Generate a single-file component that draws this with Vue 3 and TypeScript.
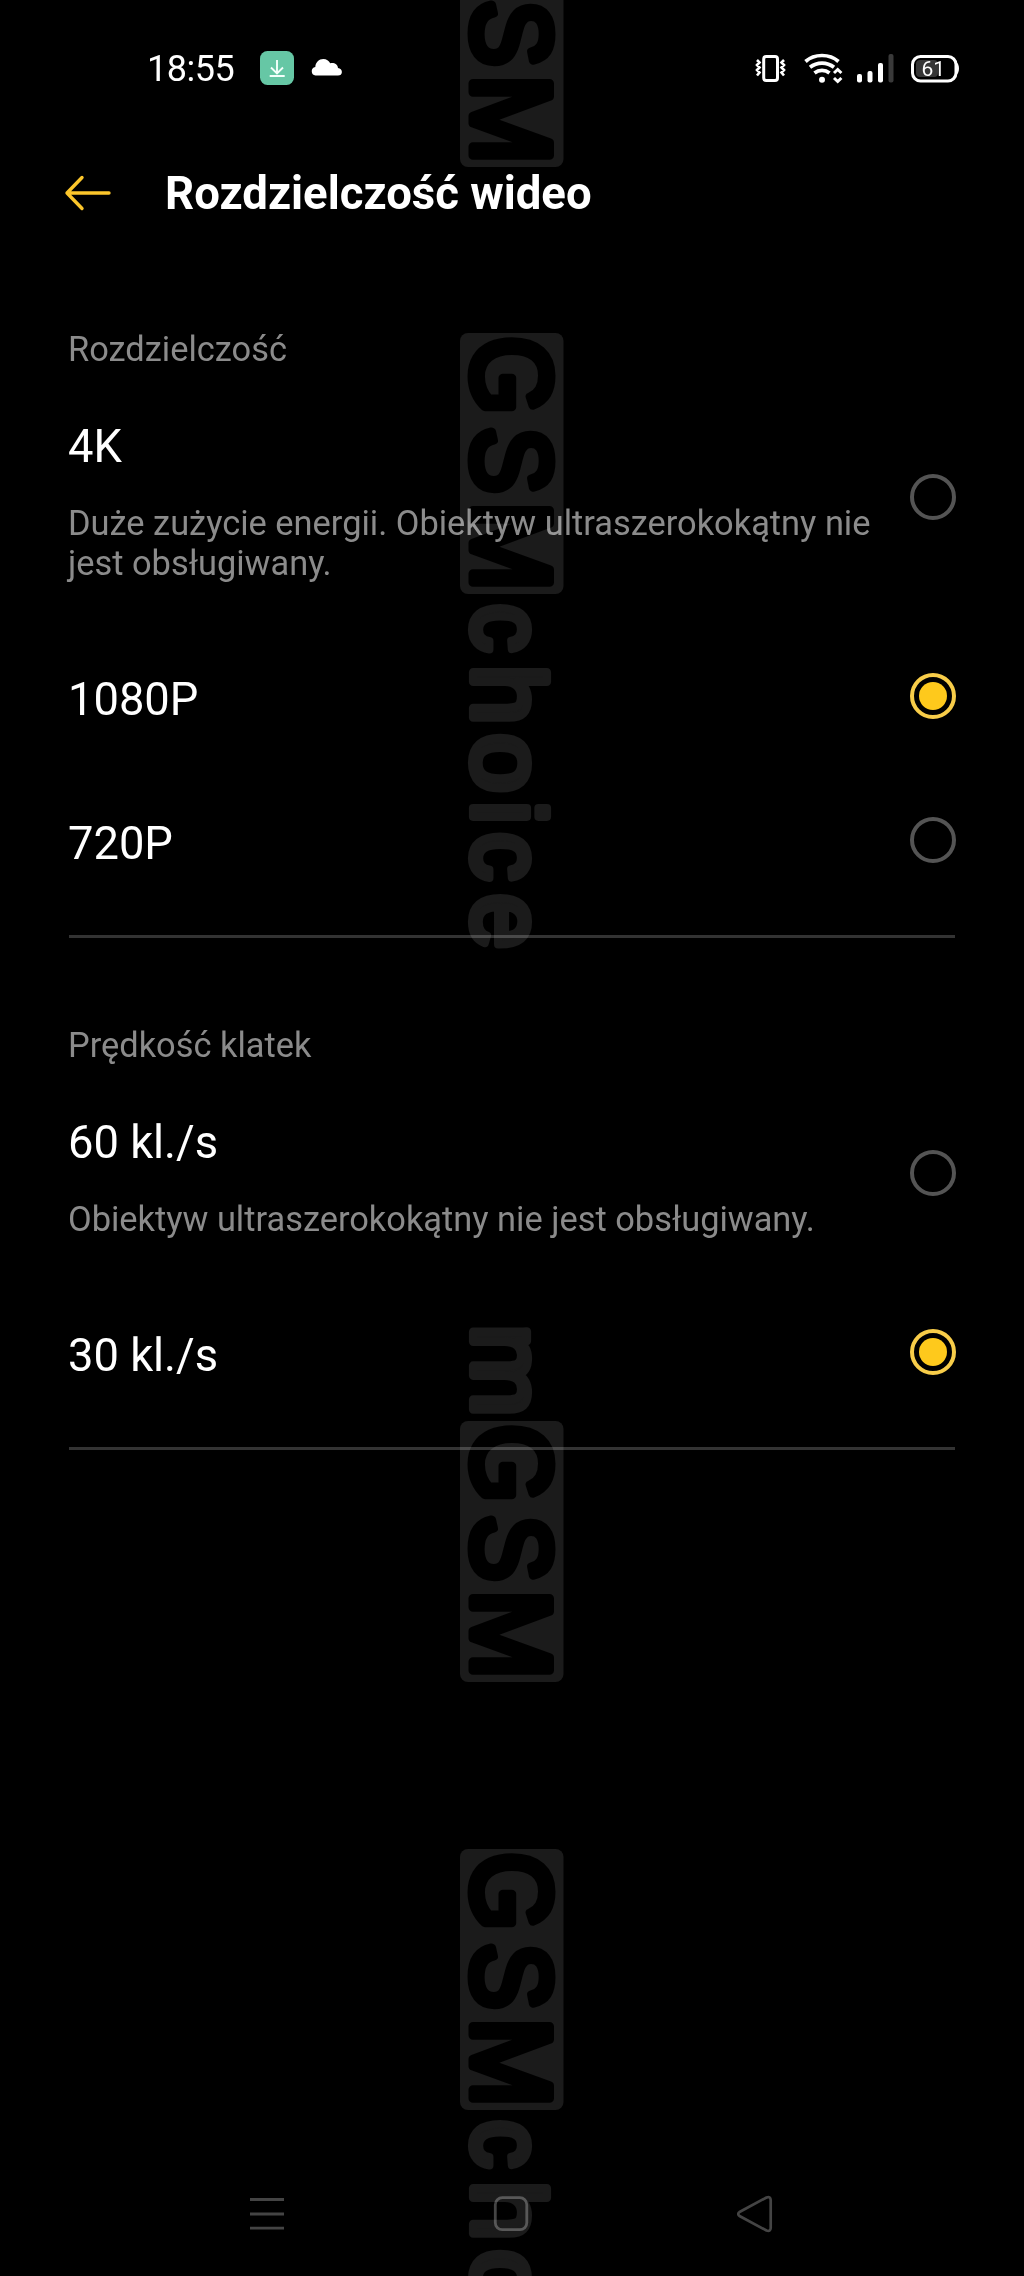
<script setup lang="ts">
import { ref } from 'vue'

interface Option {
  label: string
  note?: string
}

interface Group {
  title: string
  options: Option[]
}

interface Glyph {
  ch: string
  at: number
  bearing: number
  stretch: number
}

interface Mark {
  y: number
  boxed: Glyph[]
  outside: Glyph[]
}

const groups: Group[] = [
  {
    title: 'Rozdzielczość',
    options: [
      { label: '4K', note: 'Duże zużycie energii. Obiektyw ultraszerokokątny nie jest obsługiwany.' },
      { label: '1080P' },
      { label: '720P' },
    ],
  },
  {
    title: 'Prędkość klatek',
    options: [
      { label: '60 kl./s', note: 'Obiektyw ultraszerokokątny nie jest obsługiwany.' },
      { label: '30 kl./s' },
    ],
  },
]

const selected = ref<number[]>([1, 1])

const markSize = 112
const boxed: Glyph[] = [
  { ch: 'G', at: 4, bearing: 0.053, stretch: 0.9 },
  { ch: 'S', at: 94, bearing: 0.045, stretch: 0.895 },
  { ch: 'M', at: 172, bearing: 0.074, stretch: 0.963 },
]
const leading: Glyph[] = [{ ch: 'm', at: -94, bearing: 0.066, stretch: 0.99 }]
const trailing: Glyph[] = [
  { ch: 'c', at: 270, bearing: 0.04, stretch: 0.863 },
  { ch: 'h', at: 334.5, bearing: 0.066, stretch: 0.952 },
  { ch: 'o', at: 399.5, bearing: 0.033, stretch: 0.951 },
  { ch: 'i', at: 470.5, bearing: 0.066, stretch: 0.9 },
  { ch: 'c', at: 498.5, bearing: 0.04, stretch: 0.863 },
  { ch: 'e', at: 560, bearing: 0.037, stretch: 0.887 },
]
const marks: Mark[] = [
  { y: -94, boxed: boxed.slice(1), outside: [] },
  { y: 333, boxed, outside: trailing },
  { y: 1421, boxed, outside: leading },
  { y: 1849, boxed, outside: trailing.slice(0, 3) },
]

function place(g: Glyph): string {
  const x = g.at + 4.5 - g.bearing * markSize * g.stretch
  const rise = g.ch === g.ch.toLowerCase() ? 0.91 : 1
  return `translate(${x.toFixed(2)} 0) scale(${g.stretch} ${rise})`
}
</script>

<template>
  <div class="screen">
    <header class="status">
      <div class="status-left">
        <span class="clock">18:55</span>
        <svg class="download" width="34" height="34" viewBox="0 0 34 34">
          <rect width="34" height="34" rx="7.5" fill="#66c7a5" />
          <path d="M17 9v13M11 16.5l6 6 6-6M9.700 25h15" fill="none" stroke="#f4fffb" stroke-width="1.9" />
        </svg>
        <svg class="cloud" width="31" height="17" viewBox="0 0 31 17">
          <path d="M4.500 16.500A4.300 4.300 0 0 1 4.300 8C4.600 3.500 8 0 12.300 0c3.300 0 5.500 1.700 6.900 4.300 4.200-.8 7.400 1.200 7.800 4.700 2.300.3 3.900 1.800 3.900 3.900 0 2.200-1.700 3.600-3.900 3.600z" fill="#fff" />
        </svg>
      </div>
      <svg class="indicators" width="206" height="34" viewBox="755 51 206 34">
        <g fill="none" stroke="#fff">
          <rect x="763.7" y="56.500" width="13.800" height="24" rx="2.500" stroke-width="3" />
          <path d="M757 60l2.500 2.500-2.500 2.500 2.500 2.500-2.500 2.500 2.500 2.500-2.500 3M784 60l-2.500 2.500 2.500 2.500-2.500 2.500 2.500 2.500-2.500 2.500 2.500 3" stroke-width="2.600" />
          <path d="M805.500 61.500c9-8 24-8 33 0M810 67.300c7-5.600 17-5.600 24 0M814.500 73c4.400-3.500 10.600-3.500 15 0" stroke-width="3.700" />
          <path d="M834 73l3.700-3.500 3.700 3.500M834 78l3.700 3.500 3.700-3.500" stroke-width="3" />
        </g>
        <circle cx="822" cy="79.700" r="3" fill="#fff" />
        <g fill="#fff">
          <rect x="857" y="74" width="5" height="8.500" rx="2" />
          <rect x="867.500" y="71" width="5" height="11.500" rx="2" />
          <rect x="878" y="63" width="5" height="19.500" rx="2" />
          <rect x="888.500" y="54" width="5" height="28.500" rx="2" fill="#3a3a3a" />
        </g>
        <rect x="916" y="60" width="22" height="17" rx="4" fill="#363636" />
        <rect x="912.500" y="56.500" width="43.500" height="24.500" rx="8" fill="none" stroke="#fff" stroke-width="3" />
        <path d="M956 62c4 2 4 11 0 13z" fill="#fff" />
        <text x="921.500" y="76" class="battery-text">61</text>
      </svg>
    </header>

    <div class="titlebar">
      <svg class="back" width="48" height="38" viewBox="0 0 48 38">
        <path d="M45 19H3M18 3.500L3 19l15 15.500" fill="none" stroke="#fcc62b" stroke-width="3.400" stroke-linecap="round" stroke-linejoin="round" />
      </svg>
      <h1>Rozdzielczość wideo</h1>
    </div>

    <main>
      <section v-for="(group, gi) in groups" :key="group.title" class="group">
        <h2>{{ group.title }}</h2>
        <div
          v-for="(option, oi) in group.options"
          :key="option.label"
          class="option"
          :class="{ noted: option.note }"
          @click="selected[gi] = oi"
        >
          <div class="copy">
            <div class="label">{{ option.label }}</div>
            <div v-if="option.note" class="note">{{ option.note }}</div>
          </div>
          <span class="radio" :class="{ on: selected[gi] === oi }"></span>
        </div>
        <div class="divider"></div>
      </section>
    </main>

    <nav class="navbar">
      <svg width="36" height="40" viewBox="0 0 36 40">
        <path d="M1 5.500h34M1 20h34M1 34.200h34" stroke="#444" stroke-width="2.800" />
      </svg>
      <svg width="36" height="40" viewBox="0 0 36 40">
        <rect x="2.300" y="3.700" width="31.500" height="32" rx="7" fill="none" stroke="#444" stroke-width="2.800" />
      </svg>
      <svg width="36" height="40" viewBox="0 0 36 40">
        <path d="M29.500 3.500L2.500 18q-2.500 2 0 4l27 14.500q4 1.500 4.200-2.500V6q-.2-4-4.200-2.500z" fill="none" stroke="#444" stroke-width="2.700" stroke-linejoin="round" />
      </svg>
    </nav>

    <svg class="watermark" width="1024" height="2276" viewBox="0 0 1024 2276">
      <g v-for="m in marks" :key="m.y" :transform="`translate(473 ${m.y}) rotate(90)`">
        <rect x="0" y="-90.500" width="261" height="103.500" rx="8" fill="#1b1b1b" />
        <text v-for="g in m.boxed" :key="g.ch" :transform="place(g)" class="glyph cut">{{ g.ch }}</text>
        <text v-for="g in m.outside" :key="g.at" :transform="place(g)" class="glyph">{{ g.ch }}</text>
      </g>
    </svg>
  </div>
</template>

<style>
html,
body {
  margin: 0;
  background: #000;
}
</style>

<style scoped>
.screen {
  position: relative;
  display: flex;
  flex-direction: column;
  box-sizing: border-box;
  width: 1024px;
  height: 2276px;
  overflow: hidden;
  background: #000;
  color: #fff;
  font-family: Roboto, "Liberation Sans", sans-serif;
}

.status {
  display: flex;
  justify-content: space-between;
  box-sizing: border-box;
  height: 138px;
  padding: 51px 63px 0 147px;
}

.status-left {
  display: flex;
  align-items: center;
  height: 34px;
}

.clock {
  width: 113px;
  padding-top: 1px;
  font-size: 36px;
  line-height: 34px;
  letter-spacing: -0.5px;
}

.cloud {
  margin-left: 17px;
  margin-bottom: 1px;
}

.battery-text {
  fill: #fff;
  font-size: 21px;
}

.titlebar {
  display: flex;
  align-items: center;
  height: 110px;
  padding-left: 64px;
}

h1 {
  margin: 0 0 0 53px;
  padding-top: 2px;
  font-size: 45.5px;
  font-weight: 700;
  line-height: 54px;
}

main {
  padding: 81px 68px 0 68px;
}

.group + .group {
  padding-top: 87px;
}

h2 {
  margin: 0 0 26px;
  color: #8b8b8b;
  font-size: 34.4px;
  font-weight: 400;
  line-height: 40px;
}

.option {
  display: flex;
  align-items: center;
  justify-content: space-between;
  height: 144px;
}

.option.noted {
  height: auto;
  margin-bottom: 25px;
}

.copy {
  width: 812px;
  padding-top: 8px;
}

.noted .copy {
  padding: 25px 0 16px;
}

.label {
  font-size: 45.3px;
  line-height: 54px;
}

.note {
  margin-top: 29px;
  color: #8b8b8b;
  font-size: 34.4px;
  line-height: 40px;
}

.radio {
  display: flex;
  align-items: center;
  justify-content: center;
  box-sizing: border-box;
  flex: none;
  width: 46px;
  height: 46px;
  border: 4px solid #545454;
  border-radius: 50%;
}

.radio.on {
  border-color: #f8cd49;
}

.radio.on::after {
  width: 28px;
  height: 28px;
  border-radius: 50%;
  background: #fec91c;
  content: "";
}

.divider {
  height: 3px;
  margin: 23px 1px 0 1px;
  background: #333;
}

.navbar {
  display: flex;
  align-items: center;
  justify-content: space-between;
  height: 124px;
  margin-top: auto;
  padding: 0 251px 0 249px;
}

.watermark {
  position: absolute;
  top: 0;
  left: 0;
  mix-blend-mode: screen;
  pointer-events: none;
}

.glyph {
  fill: #1b1b1b;
  stroke: #1b1b1b;
  stroke-width: 9px;
  stroke-linejoin: round;
  font-family: "Liberation Sans", Arial, sans-serif;
  font-size: 112px;
}

.glyph.cut {
  fill: #000;
  stroke: #000;
}
</style>
